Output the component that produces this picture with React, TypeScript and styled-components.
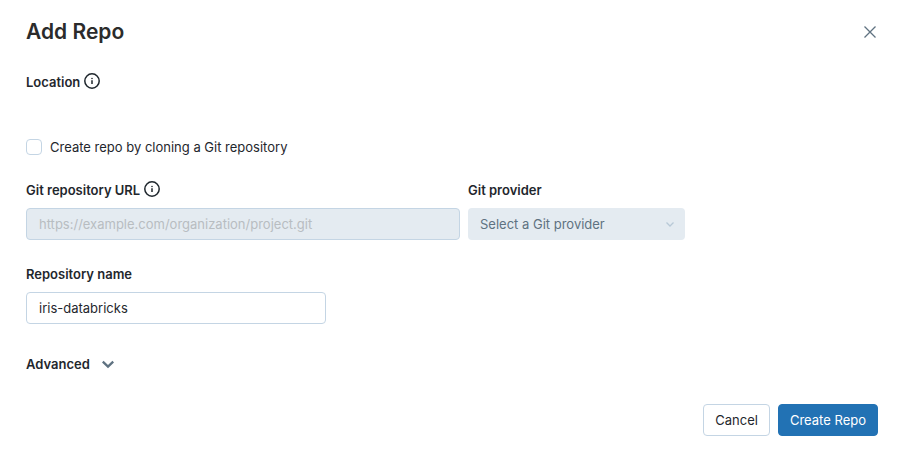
import React, { useState } from "react";
import styled, { createGlobalStyle } from "styled-components";

const GlobalStyle = createGlobalStyle`
  *, *::before, *::after { box-sizing: border-box; }
  body { margin: 0; background: #fff; }
  body, button, input, select {
    font-family: Inter, "Liberation Sans", sans-serif;
    font-size: 13px;
    line-height: 20px;
    color: #1f272d;
  }
`;

const Dialog = styled.main`
  display: flex;
  flex-direction: column;
  padding: 16px 25px 29px 26px;
`;

const Header = styled.header`
  display: flex;
  align-items: center;
  justify-content: space-between;
  margin-bottom: 24px;
`;

const Title = styled.h1`
  margin: 0;
  font-size: 21px;
  line-height: 32px;
  font-weight: 600;
  color: #2b2b2b;
`;

const IconButton = styled.button`
  display: flex;
  padding: 0;
  border: 0;
  background: none;
  color: #5f7281;
  cursor: pointer;
`;

const LabelRow = styled.div`
  display: flex;
  align-items: flex-start;
  gap: 4px;
  height: 20px;
  svg { margin-top: 1px; }
`;

const labelFont = `
  font-size: 13px;
  line-height: 20px;
  font-weight: 600;
`;

const Label = styled.label`${labelFont}`;
const SectionLabel = styled.h2`
  margin: 0;
  ${labelFont}
`;

const LocationSection = styled.section`
  padding-bottom: 45px;
`;

const CheckLabel = styled.label`
  display: flex;
  align-items: center;
  align-self: flex-start;
  gap: 8px;
  margin-bottom: 23px;
`;

const Checkbox = styled.input`
  appearance: none;
  width: 16px;
  height: 16px;
  margin: 0;
  border: 1px solid #c4d5e4;
  border-radius: 4px;
  background: #fff;
  &:checked { background: #2272b4; }
`;

const FieldRow = styled.div`
  display: grid;
  grid-template-columns: 2fr 1fr;
  gap: 8px;
  max-width: 659px;
  margin-bottom: 24px;
`;

const Field = styled.div`
  display: flex;
  flex-direction: column;
  gap: 8px;
`;

const NameField = styled(Field)`
  width: 100%;
  max-width: 300px;
  margin-bottom: 30px;
`;

const TextInput = styled.input`
  width: 100%;
  height: 32px;
  padding: 0 12px;
  border: 1px solid #c4d5e4;
  border-radius: 4px;
  background: #fff;
  &:disabled { background: #e4ebf1; }
  &::placeholder { color: #b8bdc1; opacity: 1; }
`;

const SelectBox = styled.div`
  display: grid;
  align-items: center;
  color: #b8c9d7;
  > * { grid-area: 1 / 1; }
  > svg { justify-self: end; margin-right: 9px; pointer-events: none; }
`;

const Select = styled.select`
  appearance: none;
  width: 100%;
  height: 32px;
  padding: 0 28px 0 12px;
  border: 0;
  border-radius: 4px;
  background: #e4ebf1;
  color: #5f7281;
  opacity: 1;
`;

const Disclosure = styled.button`
  display: flex;
  align-items: center;
  align-self: flex-start;
  gap: 10px;
  padding: 0;
  border: 0;
  background: none;
  font-weight: 600;
  cursor: pointer;
  svg { color: #5f7281; }
`;

const Footer = styled.footer`
  display: flex;
  justify-content: flex-end;
  gap: 8px;
  margin-top: 30px;
`;

const Button = styled.button<{ $primary?: boolean }>`
  height: 32px;
  padding: 0 11px;
  border: 1px solid ${(p) => (p.$primary ? "#2272b4" : "#c4d5e4")};
  border-radius: 4px;
  background: ${(p) => (p.$primary ? "#2272b4" : "#fff")};
  color: ${(p) => (p.$primary ? "#fff" : "#1f272d")};
  cursor: pointer;
`;

const InfoIcon = () => (
  <svg width="16" height="16" viewBox="0 0 16 16" fill="none" aria-hidden="true">
    <circle cx="8" cy="8" r="7.2" stroke="#1f272d" strokeWidth="1.5" />
    <path d="M8 7.2v3.8" stroke="#1f272d" strokeWidth="1.5" />
    <circle cx="8" cy="5.5" r="0.8" fill="#1f272d" />
  </svg>
);

const CloseIcon = () => (
  <svg width="16" height="16" viewBox="0 0 16 16" fill="none" aria-hidden="true">
    <path d="M2.5 2.5l11 11M13.5 2.5l-11 11" stroke="currentColor" strokeWidth="1.3" />
  </svg>
);

const SelectChevron = () => (
  <svg width="12" height="12" viewBox="0 0 12 12" fill="none" aria-hidden="true">
    <path d="M2.5 4.5L6 8l3.5-3.5" stroke="currentColor" strokeWidth="1.3" />
  </svg>
);

const DisclosureChevron = () => (
  <svg width="16" height="16" viewBox="0 0 16 16" fill="none" aria-hidden="true">
    <path d="M2.8 5.6L8 10.6l5.2-5" stroke="currentColor" strokeWidth="2.3" />
  </svg>
);

export default function App() {
  const [clone, setClone] = useState(false);
  const [name, setName] = useState("iris-databricks");
  const [open, setOpen] = useState(false);
  return (
    <>
      <GlobalStyle />
      <Dialog>
        <Header>
          <Title>Add Repo</Title>
          <IconButton type="button" aria-label="Close"><CloseIcon /></IconButton>
        </Header>
        <LocationSection>
          <LabelRow><SectionLabel>Location</SectionLabel><InfoIcon /></LabelRow>
        </LocationSection>
        <CheckLabel>
          <Checkbox type="checkbox" checked={clone} onChange={(e) => setClone(e.target.checked)} />
          Create repo by cloning a Git repository
        </CheckLabel>
        <FieldRow>
          <Field>
            <LabelRow><Label htmlFor="url">Git repository URL</Label><InfoIcon /></LabelRow>
            <TextInput id="url" disabled={!clone} placeholder="https://example.com/organization/project.git" />
          </Field>
          <Field>
            <Label htmlFor="provider">Git provider</Label>
            <SelectBox>
              <Select id="provider" disabled={!clone}><option>Select a Git provider</option></Select>
              <SelectChevron />
            </SelectBox>
          </Field>
        </FieldRow>
        <NameField>
          <Label htmlFor="name">Repository name</Label>
          <TextInput id="name" value={name} onChange={(e) => setName(e.target.value)} />
        </NameField>
        <Disclosure type="button" aria-expanded={open} onClick={() => setOpen(!open)}>
          Advanced <DisclosureChevron />
        </Disclosure>
        <Footer>
          <Button type="button">Cancel</Button>
          <Button type="button" $primary>Create Repo</Button>
        </Footer>
      </Dialog>
    </>
  );
}
